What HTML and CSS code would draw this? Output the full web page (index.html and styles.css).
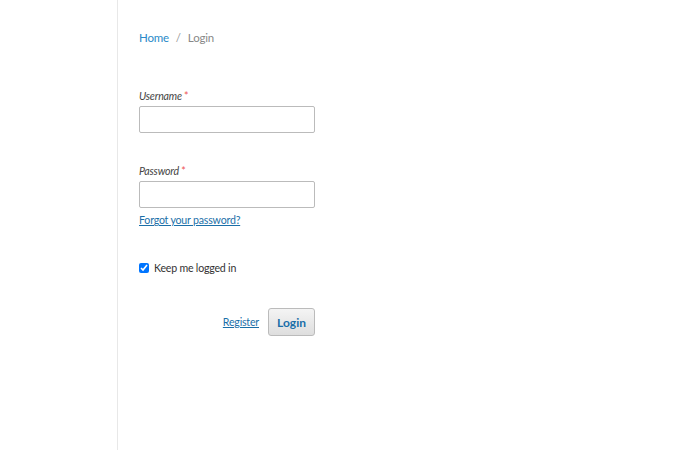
FILE: index.html
```html
<!DOCTYPE html>
<html>
<head>
<meta charset="utf-8">
<link rel="stylesheet" href="styles.css">
</head>
<body>
<div class="page">
  <aside class="side"></aside>
  <main class="main">
    <nav class="crumbs"><a href="#" class="crumb-link">Home</a><span class="sep">/</span><span class="crumb-cur">Login</span></nav>
    <form class="form">
      <div class="field">
        <label class="label">Username <span class="req">*</span></label>
        <input class="input" type="text">
      </div>
      <div class="field field-pw">
        <label class="label">Password <span class="req">*</span></label>
        <input class="input" type="password">
        <a href="#" class="link forgot">Forgot your password?</a>
      </div>
      <label class="remember"><input type="checkbox" class="check" checked> Keep me logged in</label>
      <div class="actions">
        <a href="#" class="link">Register</a>
        <button type="button" class="btn">Login</button>
      </div>
    </form>
  </main>
</div>
</body>
</html>
```
FILE: styles.css
```css
html, body { margin: 0; padding: 0; background: #fff; }
body { font-family: Lato, "Liberation Sans", sans-serif; font-size: 10.6px; letter-spacing: -0.2px; color: #3a3a3a; }
.page { display: flex; height: 450px; }
.side { width: 117px; border-right: 1px solid #e8e8e8; flex: none; }
.main { padding: 31px 0 0 21px; }
.crumbs { font-size: 11.5px; line-height: 14px; color: #888; }
.crumb-link { color: #2a8ac8; text-decoration: none; }
.sep { margin: 0 7px; color: #999; }
.form { width: 176px; margin-top: 44px; }
.field { display: flex; flex-direction: column; }
.field-pw { margin-top: 31px; }
.label { font-style: italic; color: #444; line-height: 14px; margin-bottom: 3px; padding-top: 1px; margin-top: -1px; }
.req { color: #e55; font-style: normal; }
.input { box-sizing: border-box; width: 176px; height: 27px; border: 1px solid #bbb; border-radius: 2px; margin: 0; }
.link { color: #1b6fa8; text-decoration: underline; }
.forgot { margin-top: 5px; line-height: 14px; }
.remember { display: flex; align-items: center; margin-top: 35px; color: #333; }
.check { margin: 0 5px 0 0; width: 10px; height: 10px; }
.actions { display: flex; justify-content: flex-end; align-items: center; gap: 9px; margin-top: 34px; }
.btn { width: 47px; height: 28px; border: 1px solid #bbb; border-radius: 3px; background: linear-gradient(#f4f4f4, #dedede); color: #1a6ea8; font-weight: bold; font-family: inherit; font-size: 12px; letter-spacing: 0; padding: 0; }
```
